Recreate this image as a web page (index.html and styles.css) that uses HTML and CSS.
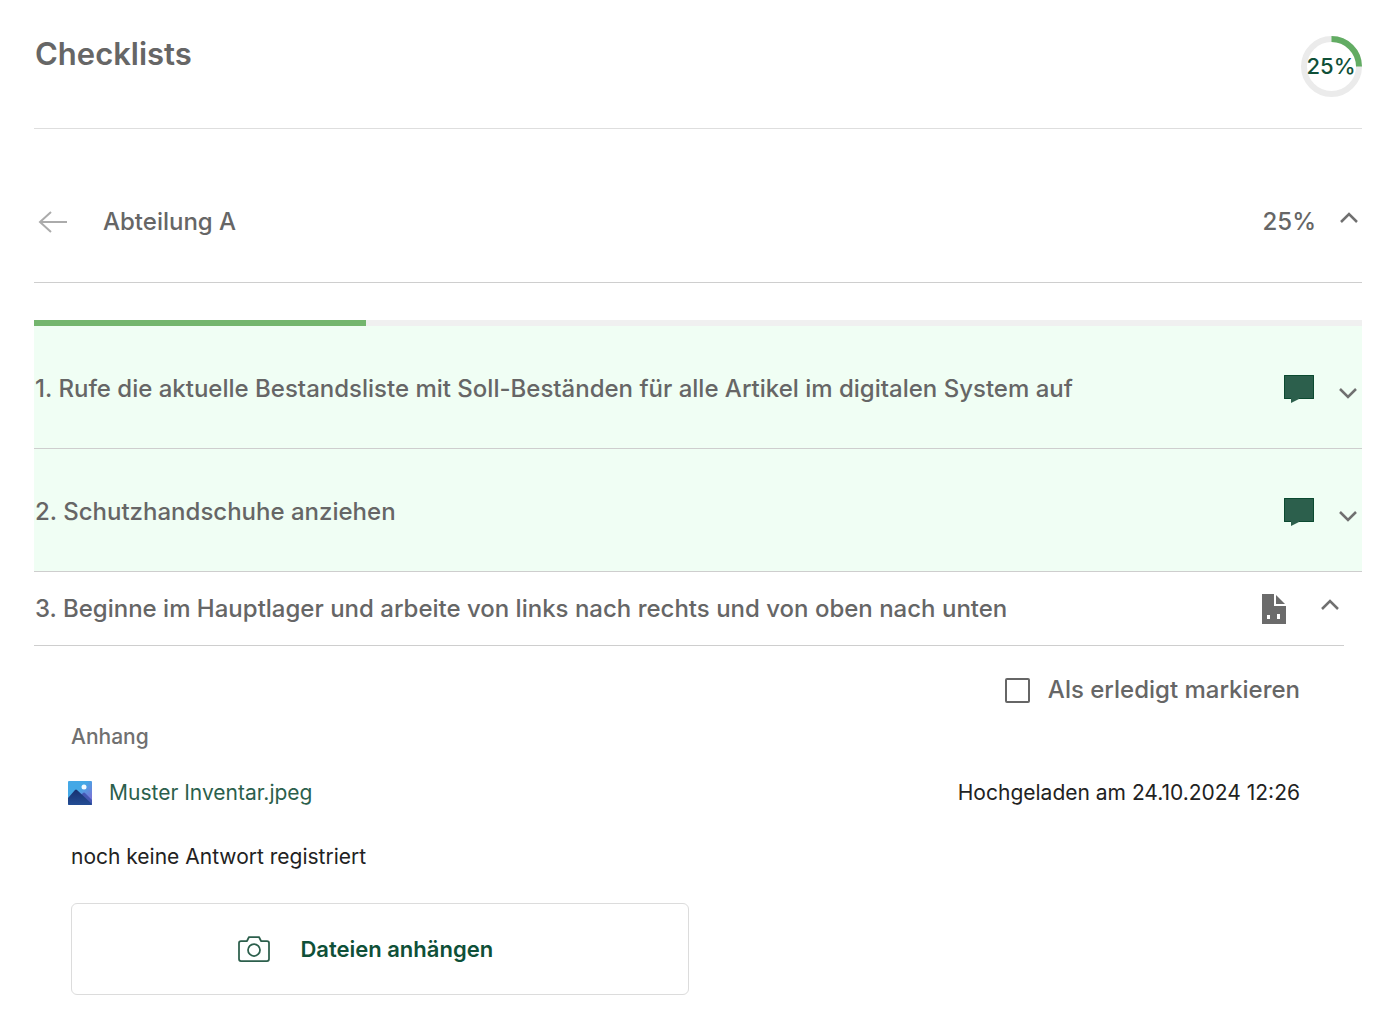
FILE: index.html
```html
<!DOCTYPE html>
<html lang="de">
<head>
    <meta charset="UTF-8">
    <meta name="viewport" content="width=device-width, initial-scale=1.0">
    <title>Checklists</title>
    <link rel="stylesheet" href="styles.css">
</head>
<body>
    <main class="page">
        <header class="page-header">
            <h1>Checklists</h1>
            <div class="ring">
                <svg viewBox="0 0 62 62" aria-hidden="true">
                    <circle cx="31.5" cy="30.5" r="27.5" fill="none" stroke="#ebebeb" stroke-width="6"/>
                    <path d="M31.5 3a27.5 27.5 0 0 1 27.5 27.5" fill="none" stroke="#62ac63" stroke-width="6"/>
                </svg>
                <span class="ring-value">25%</span>
            </div>
        </header>

        <div class="section-header">
            <button class="icon-btn back-btn" type="button" aria-label="Zurück">
                <svg width="30" height="24" viewBox="0 0 30 24" fill="none" stroke="#ababab" stroke-width="2">
                    <path d="M29 12H2M13 2L2 12l11 10"/>
                </svg>
            </button>
            <h2>Abteilung A</h2>
            <span class="section-value">25%</span>
            <button class="icon-btn chevron up" type="button" aria-label="Zuklappen">
                <svg width="18" height="12" viewBox="0 0 18 12" fill="none" stroke="#707070" stroke-width="2.5">
                    <path d="M1 10l8-8 8 8"/>
                </svg>
            </button>
        </div>

        <div class="progress">
            <div class="progress-bar" style="width: 25%"></div>
        </div>

        <section class="item done">
            <h3>1. Rufe die aktuelle Bestandsliste mit Soll-Beständen für alle Artikel im digitalen System auf</h3>
            <button class="icon-btn" type="button" aria-label="Kommentar">
                <svg width="32" height="30" viewBox="0 0 32 30">
                    <path d="M1 1h30v24H16l-8 4v-4H1z" fill="#2c5f4c"/>
                    <path d="M8 24.5H1.500V1.500h29v23H16" fill="none" stroke="#0b4a30"/>
                </svg>
            </button>
            <button class="icon-btn chevron down" type="button" aria-label="Aufklappen">
                <svg width="18" height="12" viewBox="0 0 18 12" fill="none" stroke="#707070" stroke-width="2.5">
                    <path d="M1 2l8 8 8-8"/>
                </svg>
            </button>
        </section>

        <section class="item done">
            <h3>2. Schutzhandschuhe anziehen</h3>
            <button class="icon-btn" type="button" aria-label="Kommentar">
                <svg width="32" height="30" viewBox="0 0 32 30">
                    <path d="M1 1h30v24H16l-8 4v-4H1z" fill="#2c5f4c"/>
                    <path d="M8 24.5H1.500V1.500h29v23H16" fill="none" stroke="#0b4a30"/>
                </svg>
            </button>
            <button class="icon-btn chevron down" type="button" aria-label="Aufklappen">
                <svg width="18" height="12" viewBox="0 0 18 12" fill="none" stroke="#707070" stroke-width="2.5">
                    <path d="M1 2l8 8 8-8"/>
                </svg>
            </button>
        </section>

        <section class="open-item">
            <div class="item">
                <h3>3. Beginne im Hauptlager und arbeite von links nach rechts und von oben nach unten</h3>
                <button class="icon-btn file-btn" type="button" aria-label="Datei">
                    <svg width="24" height="30" viewBox="0 0 24 30" fill="#6b6b6b">
                        <path fill-rule="evenodd" d="M0 0h12v12h12v18H0zM5 21v4h3v-4zM15 20v5h3v-5z"/>
                        <path d="M14 1l9 9h-9z"/>
                    </svg>
                </button>
                <button class="icon-btn chevron up" type="button" aria-label="Zuklappen">
                    <svg width="18" height="12" viewBox="0 0 18 12" fill="none" stroke="#707070" stroke-width="2.5">
                        <path d="M1 10l8-8 8 8"/>
                    </svg>
                </button>
            </div>

            <div class="details">
                <div class="mark-done">
                    <input type="checkbox" id="markDone">
                    <label for="markDone">Als erledigt markieren</label>
                </div>

                <h4>Anhang</h4>
                <div class="attachment">
                    <svg width="24" height="24" viewBox="0 0 24 24" aria-hidden="true">
                        <defs>
                            <linearGradient id="sky" x1="0" y1="0" x2="1" y2="1">
                                <stop offset="0.4" stop-color="#44a8e6"/>
                                <stop offset="0.8" stop-color="#7678d8"/>
                            </linearGradient>
                            <linearGradient id="hill" x1="0" y1="0" x2="0" y2="1">
                                <stop offset="0" stop-color="#173070"/>
                                <stop offset="1" stop-color="#234d94"/>
                            </linearGradient>
                        </defs>
                        <rect width="24" height="24" rx="1" fill="url(#sky)"/>
                        <path d="M13 14l2-2q1-1 2 0l7 7v5z" fill="#4558b4"/>
                        <path d="M0 17l7-8q1-1 2 0l15 14q0 1-1 1H1q-1 0-1-1z" fill="url(#hill)"/>
                        <circle cx="16" cy="6" r="2.5" fill="#f2faff"/>
                    </svg>
                    <a href="#">Muster Inventar.jpeg</a>
                    <span class="uploaded">Hochgeladen am 24.10.2024 12:26</span>
                </div>

                <p>noch keine Antwort registriert</p>

                <button class="attach-btn" type="button">
                    <svg width="32" height="26" viewBox="0 0 32 26" fill="none" stroke="#2c5f4c" stroke-width="1.75" stroke-linejoin="round">
                        <path d="M3 5h6l2-4h10l2 4h6q2 0 2 2v16q0 2-2 2H3q-2 0-2-2V7q0-2 2-2z"/>
                        <circle cx="16" cy="14" r="6"/>
                    </svg>
                    Dateien anhängen
                </button>
            </div>
        </section>
    </main>
</body>
</html>
```

FILE: styles.css
```css
* {
    box-sizing: border-box;
}
body {
    margin: 0;
    font-family: Inter, "Liberation Sans", sans-serif;
    background: #fff;
    color: #666;
}
h1, h2, h3, h4, p {
    margin: 0;
}
svg {
    display: block;
}
.page {
    padding: 0 36px 32px 34px;
}
.page-header {
    display: flex;
    justify-content: space-between;
    align-items: flex-start;
    padding: 36px 0 30px 1px;
    border-bottom: 1px solid #dedede;
}
h1 {
    font-size: 31px;
    line-height: 36px;
    font-weight: 600;
}
.ring {
    position: relative;
    width: 62px;
    height: 62px;
}
.ring-value {
    position: absolute;
    inset: 0;
    text-align: center;
    font-size: 22px;
    line-height: 60px;
    font-weight: 500;
    color: #0f5038;
}
.icon-btn {
    flex: none;
    padding: 0;
    border: none;
    background: none;
    cursor: pointer;
}
.section-header {
    display: flex;
    align-items: center;
    height: 154px;
    padding: 32px 4px 0;
    border-bottom: 1px solid #cecece;
}
.back-btn {
    margin-right: 35px;
}
h2, h3, .section-value {
    font-size: 24px;
    line-height: 32px;
    font-weight: 500;
}
.section-value {
    margin-left: auto;
}
.chevron {
    margin-left: 24px;
}
.chevron.up {
    padding-bottom: 8px;
}
.chevron.down {
    padding-top: 8px;
}
.progress {
    height: 6px;
    margin-top: 37px;
    background: #f0f0f0;
}
.progress-bar {
    height: 100%;
    background: #74b66e;
}
.item {
    display: flex;
    align-items: center;
    padding: 0 5px 0 1px;
    border-bottom: 1px solid #cecece;
}
.item h3 {
    flex: 1;
}
.done {
    min-height: 123px;
    padding-top: 3px;
    background: #f0fef4;
}
.open-item {
    margin-right: 18px;
}
.open-item .item {
    min-height: 74px;
    padding-top: 1px;
}
.file-btn {
    margin-right: 11px;
}
.details {
    padding: 28px 44px 0 37px;
}
.mark-done {
    display: flex;
    justify-content: flex-end;
    align-items: center;
    gap: 18px;
    font-size: 24px;
    line-height: 32px;
    font-weight: 500;
}
.mark-done input {
    appearance: none;
    width: 25px;
    height: 25px;
    margin: 0;
    border: 2px solid #666;
    border-radius: 2px;
}
.mark-done input:checked {
    background: #2c5f4c;
}
h4 {
    margin-top: 15px;
    font-size: 21px;
    line-height: 32px;
    font-weight: 500;
    color: #707070;
}
.attachment {
    display: flex;
    align-items: center;
    margin: 24px 0 32px -3px;
    font-size: 21px;
    line-height: 32px;
}
.attachment a {
    margin-left: 17px;
    color: #2c5f4c;
    text-decoration: none;
}
.attachment a:hover {
    text-decoration: underline;
}
.uploaded {
    margin-left: auto;
    color: #222;
}
.details p {
    font-size: 21px;
    line-height: 32px;
    color: #222;
}
.attach-btn {
    display: flex;
    justify-content: center;
    align-items: center;
    gap: 30px;
    width: calc(50% + 3px);
    height: 92px;
    margin-top: 30px;
    padding: 0 28px 0 0;
    border: 1px solid #dcdcdc;
    border-radius: 6px;
    background: #fff;
    font-family: inherit;
    font-size: 22px;
    font-weight: 600;
    color: #0f5038;
    cursor: pointer;
}
```
